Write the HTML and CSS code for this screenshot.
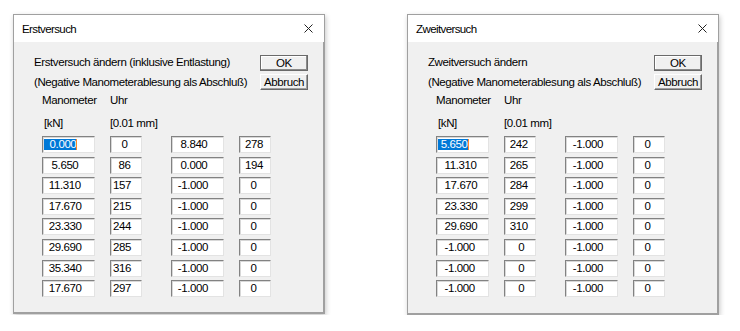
FILE: index.html
```html
<!DOCTYPE html>
<html lang="de">
  <head>
    <meta charset="UTF-8" />
    <title>Versuche</title>
    <link rel="stylesheet" href="styles.css">
  </head>
  <body>
    <div class="desk">
      <!-- Erstversuch -->
      <div class="dialog first">
        <div class="titlebar">
          <span class="title">Erstversuch</span>
          <svg class="close" width="9" height="9" viewBox="0 0 9 9"><path d="M0.5 0.5 L8.5 8.5 M8.5 0.5 L0.5 8.5" stroke="#222" stroke-width="1" /></svg>
        </div>
        <div class="body">
          <div class="head">
            <div class="intro">
              <p>Erstversuch ändern (inklusive Entlastung)</p>
              <p>(Negative Manometerablesung als Abschluß)</p>
            </div>
            <div class="buttons">
              <button class="btn default">OK</button>
              <button class="btn">Abbruch</button>
            </div>
          </div>
          <div class="grid labels">
            <span>Manometer</span><span>Uhr</span><span></span><span></span>
            <span class="unit">[kN]</span><span>[0.01 mm]</span><span></span><span></span>
          </div>
          <div class="grid values">
            <div class="cell c1"><span class="sel">  0.000</span><i class="caret"></i></div><div class="cell c2">   0</div><div class="cell c3">  8.840</div><div class="cell c4">278</div>
            <div class="cell c1">  5.650</div><div class="cell c2">  86</div><div class="cell c3">  0.000</div><div class="cell c4">194</div>
            <div class="cell c1"> 11.310</div><div class="cell c2">157</div><div class="cell c3"> -1.000</div><div class="cell c4">  0</div>
            <div class="cell c1"> 17.670</div><div class="cell c2">215</div><div class="cell c3"> -1.000</div><div class="cell c4">  0</div>
            <div class="cell c1"> 23.330</div><div class="cell c2">244</div><div class="cell c3"> -1.000</div><div class="cell c4">  0</div>
            <div class="cell c1"> 29.690</div><div class="cell c2">285</div><div class="cell c3"> -1.000</div><div class="cell c4">  0</div>
            <div class="cell c1"> 35.340</div><div class="cell c2">316</div><div class="cell c3"> -1.000</div><div class="cell c4">  0</div>
            <div class="cell c1"> 17.670</div><div class="cell c2">297</div><div class="cell c3"> -1.000</div><div class="cell c4">  0</div>
          </div>
        </div>
      </div>

      <!-- Zweitversuch -->
      <div class="dialog second">
        <div class="titlebar">
          <span class="title">Zweitversuch</span>
          <svg class="close" width="9" height="9" viewBox="0 0 9 9"><path d="M0.5 0.5 L8.5 8.5 M8.5 0.5 L0.5 8.5" stroke="#222" stroke-width="1" /></svg>
        </div>
        <div class="body">
          <div class="head">
            <div class="intro">
              <p>Zweitversuch ändern</p>
              <p>(Negative Manometerablesung als Abschluß)</p>
            </div>
            <div class="buttons">
              <button class="btn default">OK</button>
              <button class="btn">Abbruch</button>
            </div>
          </div>
          <div class="grid labels">
            <span>Manometer</span><span>Uhr</span><span></span><span></span>
            <span class="unit">[kN]</span><span>[0.01 mm]</span><span></span><span></span>
          </div>
          <div class="grid values">
            <div class="cell c1"><span class="sel"> 5.650</span><i class="caret"></i></div><div class="cell c2"> 242</div><div class="cell c3"> -1.000</div><div class="cell c4">  0</div>
            <div class="cell c1">  11.310</div><div class="cell c2"> 265</div><div class="cell c3"> -1.000</div><div class="cell c4">  0</div>
            <div class="cell c1">  17.670</div><div class="cell c2"> 284</div><div class="cell c3"> -1.000</div><div class="cell c4">  0</div>
            <div class="cell c1">  23.330</div><div class="cell c2"> 299</div><div class="cell c3"> -1.000</div><div class="cell c4">  0</div>
            <div class="cell c1">  29.690</div><div class="cell c2"> 310</div><div class="cell c3"> -1.000</div><div class="cell c4">  0</div>
            <div class="cell c1">  -1.000</div><div class="cell c2">    0</div><div class="cell c3"> -1.000</div><div class="cell c4">  0</div>
            <div class="cell c1">  -1.000</div><div class="cell c2">    0</div><div class="cell c3"> -1.000</div><div class="cell c4">  0</div>
            <div class="cell c1">  -1.000</div><div class="cell c2">    0</div><div class="cell c3"> -1.000</div><div class="cell c4">  0</div>
          </div>
        </div>
      </div>
    </div>
  </body>
</html>
```

FILE: styles.css
```css
body {
  margin: 0;
  padding: 0;
  background-color: #fff;
  color: #000;
  font-family: "Liberation Sans", Arial, sans-serif;
  font-size: 11.5px;
  letter-spacing: -0.4px;
}
.desk {
  display: flex;
  gap: 82px;
  padding: 14px 0 0 13px;
}
.dialog {
  width: 312px;
  height: 301px;
  box-sizing: border-box;
  border: 1px solid #a0a0a0;
  box-shadow: 1px 2px 5px rgba(0, 0, 0, 0.22);
  display: flex;
  flex-direction: column;
  background-color: #f0f0f0;
}
.dialog.first {
  height: 300px;
}
.titlebar {
  height: 27px;
  background-color: #fff;
  display: flex;
  align-items: center;
  justify-content: space-between;
  padding: 0 11px 0 8px;
}
.title {
  font-size: 11.5px;
  letter-spacing: -0.6px;
  line-height: 27px;
  margin-top: 1px;
}
.close {
  display: block;
}
.body {
  flex: 1;
  padding: 0 15px 0 20px;
  border-right: 1px solid #a0a0a0;
  border-bottom: 1px solid #a0a0a0;
}
.head {
  display: flex;
  justify-content: space-between;
  height: 48px;
}
.intro p {
  margin: 0;
  line-height: 16px;
}
.intro p:first-child {
  margin-top: 12px;
}
.intro p + p {
  margin-top: 4px;
}
.buttons {
  display: flex;
  flex-direction: column;
  gap: 3px;
  margin-top: 13px;
}
.btn {
  width: 48px;
  height: 16px;
  padding: 0;
  font-family: inherit;
  font-size: 11.5px;
  letter-spacing: -0.4px;
  line-height: 13px;
  color: #000;
  background-color: #f0f0f0;
  border: 1px solid;
  border-color: #fff #696969 #696969 #fff;
  box-shadow: inset -1px -1px 0 #a0a0a0;
}
.btn.default {
  border-color: #6a6a6a;
  box-shadow: inset -1px -1px 0 #8a8a8a, inset 1px 1px 0 #fff;
}
.grid {
  display: grid;
  grid-template-columns: 53px 32px 67px 32px;
  column-gap: 15px;
  margin-left: 8px;
}
.labels {
  margin-top: 2px;
  row-gap: 7px;
  line-height: 16px;
  white-space: nowrap;
}
.labels .unit {
  padding-left: 2px;
}
.values {
  margin-top: 5px;
  row-gap: 3.6px;
}
.cell {
  height: 17px;
  box-sizing: border-box;
  background-color: #fff;
  border: 1px solid;
  border-color: #828282 #e3e3e3 #e3e3e3 #828282;
  box-shadow: inset 1px 1px 0 #d8d8d8;
  line-height: 15px;
  white-space: pre;
  padding-left: 2px;
  overflow: hidden;
}
.first .cell.c1 {
  padding-left: 3px;
}
.cell.c3 {
  width: 53px;
  justify-self: end;
  padding-left: 3px;
}
.cell.c4 {
  padding-left: 5px;
}
.second .cell.c3 {
  padding-left: 4px;
}
.sel {
  background-color: #0078d7;
  color: #fff;
  line-height: 11px;
  display: inline-block;
  vertical-align: top;
  margin-top: 2px;
  margin-left: -2px;
}
.second .sel {
  margin-left: -1px;
}
.caret {
  display: inline-block;
  width: 1px;
  height: 11px;
  background-color: #ff8728;
  vertical-align: top;
  margin-top: 2px;
}
```
